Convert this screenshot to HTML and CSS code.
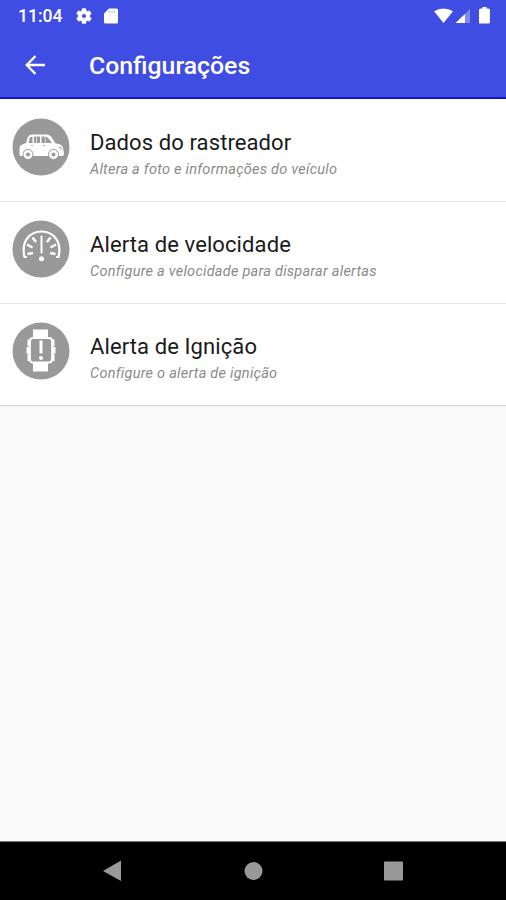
FILE: index.html
```
<!DOCTYPE html>
<html lang="pt-BR">
<head>
  <meta charset="UTF-8" />
  <meta name="viewport" content="width=device-width, initial-scale=1.0"/>
  <title>Configurações</title>
  <link rel="stylesheet" href="styles.css">
</head>
<body>
  <header class="header">
    <div class="status-bar">
      <span class="time">11:04</span>
      <svg class="icon-gear" width="18" height="18" viewBox="0 0 24 24"><path fill="#fff" stroke="#fff" stroke-width=".6" fill-rule="evenodd" d="M19.4 13c0-.3.1-.6.1-1s0-.7-.1-1l2.1-1.6c.2-.2.3-.4.1-.6l-2-3.500c-.1-.2-.4-.3-.6-.2l-2.500 1a7 7 0 0 0-1.700-1l-.4-2.600c0-.3-.2-.5-.5-.5h-4c-.2 0-.4.2-.5.4l-.4 2.700c-.6.2-1.100.6-1.700 1l-2.500-1c-.2-.1-.5 0-.6.200l-2 3.400c-.1.300 0 .5.200.7L4.500 11a8 8 0 0 0 0 2l-2.100 1.600c-.2.200-.3.400-.1.600l2 3.500c.1.200.4.300.6.200l2.500-1c.5.400 1.100.7 1.700 1l.4 2.600c0 .3.200.5.500.5h4c.3 0 .5-.2.500-.5l.4-2.600c.6-.2 1.200-.6 1.700-1l2.500 1c.2.100.5 0 .6-.2l2-3.500c.1-.2.100-.4-.1-.6zM12 15a3 3 0 1 1 0-6 3 3 0 0 1 0 6z"/></svg>
      <svg class="icon-card" width="14" height="16" viewBox="0 0 14 16"><path fill="#fff" d="M5 .5h7.500Q14 .5 14 2v12q0 1.500-1.500 1.500h-11Q0 15.500 0 14V5.500z"/><path stroke="#b3b8f4" stroke-width="1" d="M5.500 2.500V5M8 2.500V5M10.500 2.500V5"/></svg>
      <svg class="icon-signals" width="58" height="18" viewBox="0 0 58 18">
        <path fill="#fff" d="M0 4.200Q9.500-1.400 19 4.200L9.500 16z"/>
        <path fill="#7f88eb" d="M36 2v14H22z"/>
        <path fill="#fff" d="M31 7v9h-9.500z"/>
        <path fill="#fff" d="M48.500 1.500h4V0h-4zM46.500 1.500h8q1.500 0 1.500 1.500v12q0 1.500-1.500 1.500h-8Q45 17 45 15.500V3q0-1.500 1.500-1.500z"/>
      </svg>
    </div>
    <div class="toolbar">
      <svg width="20" height="20" viewBox="0 0 20 20"><path fill="none" stroke="#fff" stroke-width="2.300" d="M10.500 1 1.700 10l8.800 9M2 10h18"/></svg>
      <h1>Configurações</h1>
    </div>
  </header>

  <main class="list">
    <div class="item">
      <svg class="item-icon" width="58" height="58" viewBox="0 0 58 58">
        <circle cx="29" cy="29" r="28.500" fill="#999"/>
        <path fill="#fff" d="M9 38q-1.500 0-1.500-2v-6q0-3 4-4l2.500-1 2-6q1-2.500 3.500-2.500h15q3 0 5 2.500l4 6.500q5 0 7 3l1 4 .5 3q0 2.500-2 2.500z"/>
        <path fill="#999" d="M18 19h2.500v6h-4zM22 18.500h6V25h-6zM29.500 18.500h3q3 0 4.500 2.500l3 4H29.500z"/>
        <path stroke="#ddd" stroke-width="1" d="M24.500 18v7M32.500 18l1.500 7"/>
        <path fill="none" stroke="#aaa" stroke-width="1" d="M19 27.500h2M31 27.500h2M47 29.500h2v2.500"/>
        <circle cx="16" cy="36.500" r="5" fill="#fff" stroke="#999"/>
        <circle cx="16" cy="36.500" r="2" fill="#999"/>
        <circle cx="41.500" cy="36.500" r="5" fill="#fff" stroke="#999"/>
        <circle cx="41.500" cy="36.500" r="2" fill="#999"/>
      </svg>
      <div class="item-text">
        <h2>Dados do rastreador</h2>
        <p>Altera a foto e informações do veículo</p>
      </div>
    </div>

    <div class="item">
      <svg class="item-icon" width="58" height="58" viewBox="0 0 58 58">
        <circle cx="29" cy="29" r="28.500" fill="#999"/>
        <g fill="none" stroke="#fff">
          <path stroke-width="2.200" stroke-linecap="round" d="M14 37h-1.500C9 22 17 11.500 29.500 11.500S50 22 46.500 37H45"/>
          <path stroke-width="2" stroke-linecap="round" d="M29.500 16.500v16"/>
          <path stroke-width="2.500" d="m20.500 17.500 3.500 4.500M15 24.500l5.500 3M15.500 34l5.500-1M38.500 17.500l-3.500 4.500M44 24.500l-5.500 3M43.500 34l-5.500-1"/>
        </g>
        <circle cx="29.500" cy="38.800" r="2.500" fill="#fff"/>
      </svg>
      <div class="item-text">
        <h2>Alerta de velocidade</h2>
        <p>Configure a velocidade para disparar alertas</p>
      </div>
    </div>

    <div class="item">
      <svg class="item-icon" width="58" height="58" viewBox="0 0 58 58">
        <circle cx="29" cy="29" r="28.500" fill="#999"/>
        <path fill="#fff" d="M21 7.500h15V16H21zM21 41h15v8.500H21z"/>
        <path fill="#fff" d="M15.500 17.500H18V39h-2.500v-6l-1-1v-7.500l1-1zM42.500 17.500H40V39h2.500v-6l1-1v-7.500l-1-1z"/>
        <path stroke="#999" stroke-width="1" d="M14 24.500h2.500M14 32h2.500M41.500 24.500H44M41.500 32H44"/>
        <rect x="18" y="16" width="22" height="24.500" rx="3" fill="#999" stroke="#fff" stroke-width="1.800"/>
        <path stroke="#fff" stroke-width="3" d="M29 18.500v13"/>
        <circle cx="29" cy="36" r="2" fill="#fff"/>
      </svg>
      <div class="item-text">
        <h2>Alerta de Ignição</h2>
        <p>Configure o alerta de ignição</p>
      </div>
    </div>
  </main>

  <footer class="nav-bar">
    <svg width="506" height="58" viewBox="0 0 506 58" fill="#999">
      <path d="M103 29 121 18.500v20.500z"/>
      <circle cx="253.500" cy="29" r="9"/>
      <rect x="384" y="19.500" width="19" height="19" rx="1"/>
    </svg>
  </footer>
</body>
</html>
```

FILE: styles.css
```
* {
  box-sizing: border-box;
}
body {
  font-family: Roboto, sans-serif;
  background: #fafafa;
  display: flex;
  flex-direction: column;
  height: 100vh;
  margin: 0;
}
h1, h2, p {
  margin: 0;
}
svg {
  display: block;
  flex: none;
}
.header {
  background: #404de2;
  color: #fff;
  height: 99px;
  border-bottom: 2px solid #1716c4;
}
.status-bar {
  display: flex;
  align-items: center;
  height: 32px;
  padding: 0 14px 0 18px;
}
.time {
  font-size: 17.5px;
  font-weight: 500;
  width: 57px;
}
.icon-card {
  margin-left: 11px;
}
.icon-signals {
  margin-left: auto;
}
.toolbar {
  display: flex;
  align-items: center;
  gap: 44px;
  height: 65px;
  padding-left: 25px;
}
.toolbar h1 {
  font-size: 24.8px;
  font-weight: 500;
  line-height: 30px;
  padding-top: 3px;
}
.list {
  background: #fff;
}
.item {
  display: flex;
  height: 102px;
  padding: 18px 12px 0;
  border-bottom: 1px solid #e4e4e4;
}
.item:first-child {
  height: 103px;
  padding-top: 19px;
}
.item:last-child {
  border-bottom-color: #d4d4d4;
}
.item-text {
  margin-left: 20px;
  padding-top: 11px;
}
.item h2 {
  font-size: 22px;
  font-weight: 400;
  line-height: 28px;
  letter-spacing: 0.1px;
  color: #1a1a1a;
}
.item p {
  font-size: 14.5px;
  font-style: italic;
  line-height: 18px;
  letter-spacing: 0.25px;
  margin-top: 4px;
  color: #8a8a8a;
}
.nav-bar {
  background: #000;
  height: 59px;
  margin-top: auto;
  border-top: 1px solid #777;
}
```
